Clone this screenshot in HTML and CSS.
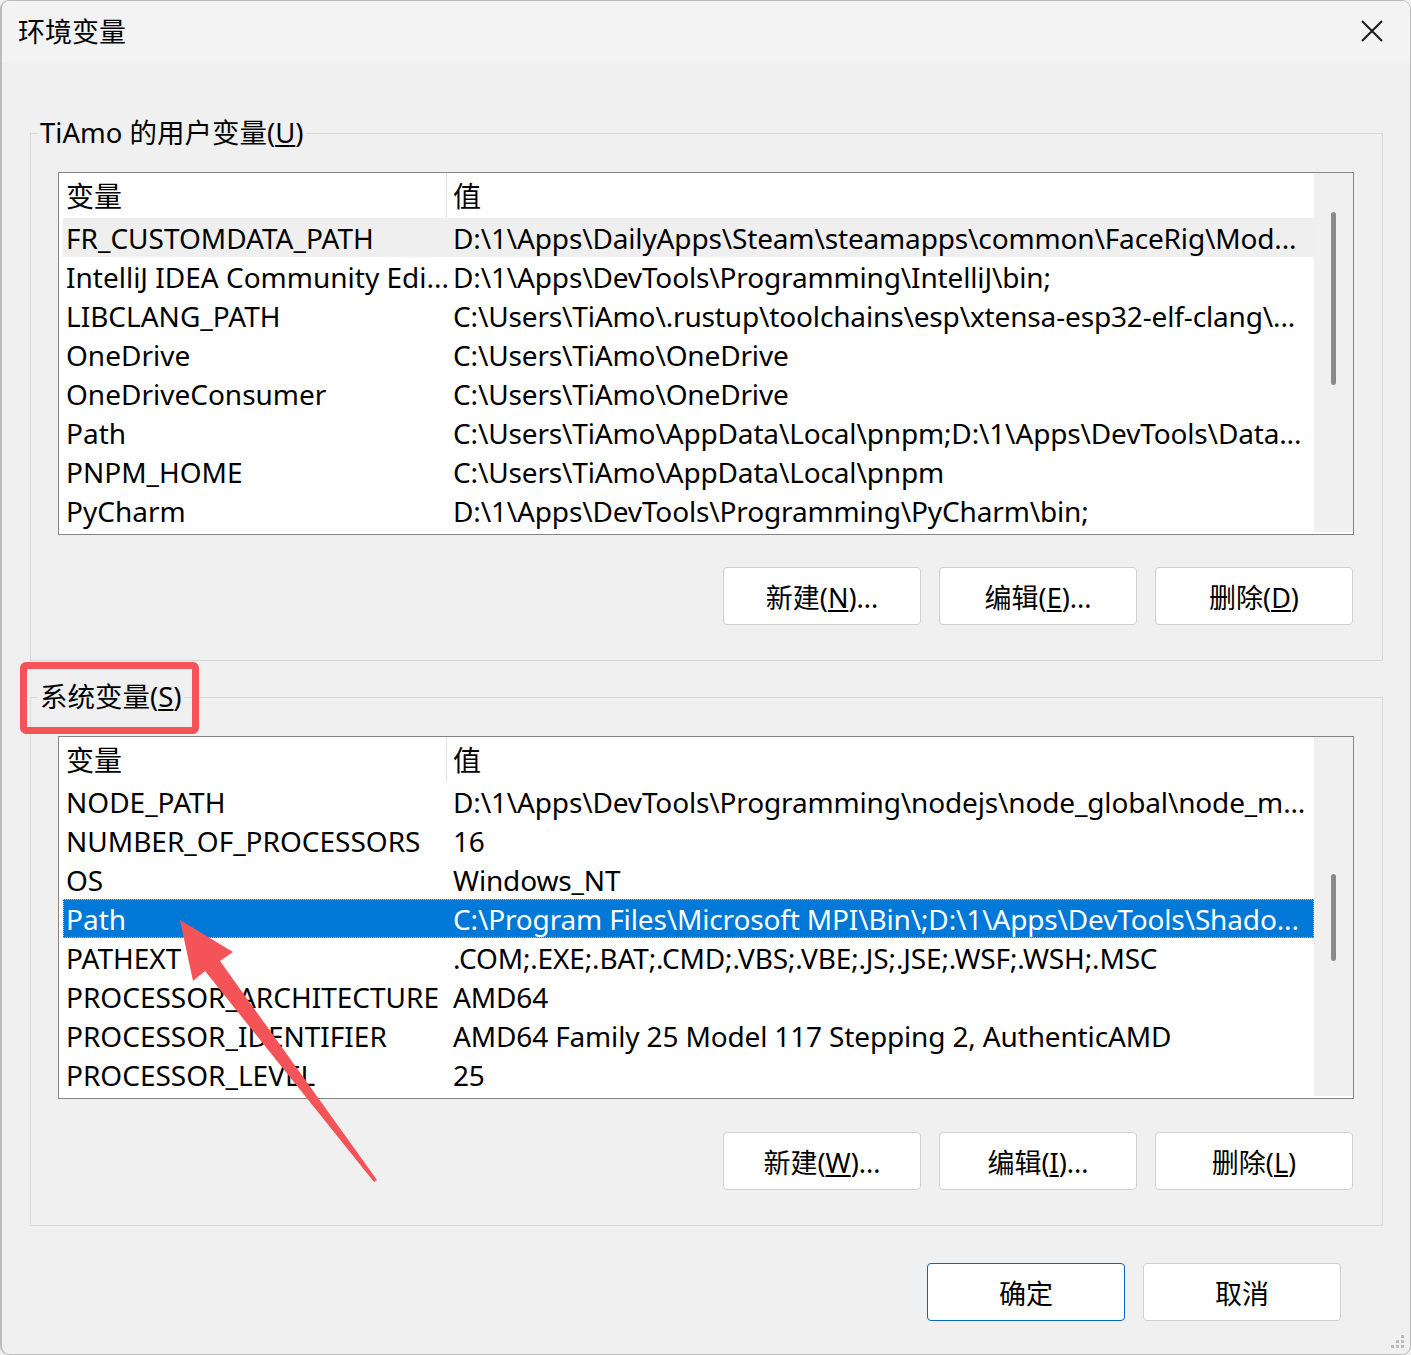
FILE: index.html
```html
<!DOCTYPE html>
<html>
<head>
  <meta charset="utf-8">
  <title>环境变量</title>
  <link rel="stylesheet" href="styles.css">
</head>
<body>
  <div class="window">
    <div class="titlebar">
      <span class="title">环境变量</span>
      <button class="close" aria-label="关闭">
        <svg width="22" height="22" viewBox="0 0 22 22"><path d="M1 1 L21 21 M21 1 L1 21" stroke="#1b1b1b" stroke-width="2" fill="none"/></svg>
      </button>
    </div>

    <fieldset class="group">
      <legend>TiAmo 的用户变量(<u>U</u>)</legend>
      <div class="list">
        <div class="list-body">
          <div class="row head"><span class="cell name">变量</span><span class="cell value">值</span></div>
          <div class="row hover"><span class="cell name">FR_CUSTOMDATA_PATH</span><span class="cell value">D:\1\Apps\DailyApps\Steam\steamapps\common\FaceRig\Mod...</span></div>
          <div class="row"><span class="cell name">IntelliJ IDEA Community Edi...</span><span class="cell value">D:\1\Apps\DevTools\Programming\IntelliJ\bin;</span></div>
          <div class="row"><span class="cell name">LIBCLANG_PATH</span><span class="cell value">C:\Users\TiAmo\.rustup\toolchains\esp\xtensa-esp32-elf-clang\...</span></div>
          <div class="row"><span class="cell name">OneDrive</span><span class="cell value">C:\Users\TiAmo\OneDrive</span></div>
          <div class="row"><span class="cell name">OneDriveConsumer</span><span class="cell value">C:\Users\TiAmo\OneDrive</span></div>
          <div class="row"><span class="cell name">Path</span><span class="cell value">C:\Users\TiAmo\AppData\Local\pnpm;D:\1\Apps\DevTools\Data...</span></div>
          <div class="row"><span class="cell name">PNPM_HOME</span><span class="cell value">C:\Users\TiAmo\AppData\Local\pnpm</span></div>
          <div class="row"><span class="cell name">PyCharm</span><span class="cell value">D:\1\Apps\DevTools\Programming\PyCharm\bin;</span></div>
        </div>
        <div class="scrollbar"><div class="thumb" style="margin-top: 39px; height: 173px;"></div></div>
      </div>
      <div class="actions">
        <button class="btn">新建(<u>N</u>)...</button>
        <button class="btn">编辑(<u>E</u>)...</button>
        <button class="btn">删除(<u>D</u>)</button>
      </div>
    </fieldset>

    <fieldset class="group second">
      <legend>系统变量(<u>S</u>)</legend>
      <div class="list">
        <div class="list-body">
          <div class="row head"><span class="cell name">变量</span><span class="cell value">值</span></div>
          <div class="row"><span class="cell name">NODE_PATH</span><span class="cell value">D:\1\Apps\DevTools\Programming\nodejs\node_global\node_m...</span></div>
          <div class="row"><span class="cell name">NUMBER_OF_PROCESSORS</span><span class="cell value">16</span></div>
          <div class="row"><span class="cell name">OS</span><span class="cell value">Windows_NT</span></div>
          <div class="row selected"><span class="cell name">Path</span><span class="cell value">C:\Program Files\Microsoft MPI\Bin\;D:\1\Apps\DevTools\Shado...</span></div>
          <div class="row"><span class="cell name">PATHEXT</span><span class="cell value">.COM;.EXE;.BAT;.CMD;.VBS;.VBE;.JS;.JSE;.WSF;.WSH;.MSC</span></div>
          <div class="row"><span class="cell name">PROCESSOR_ARCHITECTURE</span><span class="cell value">AMD64</span></div>
          <div class="row"><span class="cell name">PROCESSOR_IDENTIFIER</span><span class="cell value">AMD64 Family 25 Model 117 Stepping 2, AuthenticAMD</span></div>
          <div class="row"><span class="cell name">PROCESSOR_LEVEL</span><span class="cell value">25</span></div>
        </div>
        <div class="scrollbar"><div class="thumb" style="margin-top: 137px; height: 87px;"></div></div>
      </div>
      <div class="actions">
        <button class="btn">新建(<u>W</u>)...</button>
        <button class="btn">编辑(<u>I</u>)...</button>
        <button class="btn">删除(<u>L</u>)</button>
      </div>
    </fieldset>

    <div class="footer">
      <button class="btn primary">确定</button>
      <button class="btn">取消</button>
    </div>

    <!-- annotation drawn over the screenshot -->
    <div class="mark-box"></div>
    <svg class="mark-arrow" width="1411" height="1355" viewBox="0 0 1411 1355">
      <polygon points="180,920 233,952 220,961 377,1180 374,1182 205,971 193,981" fill="#f45457"/>
    </svg>

    <svg class="grip" width="16" height="16" viewBox="0 0 16 16">
      <rect x="11" y="1" width="3" height="3"/>
      <rect x="6" y="6" width="3" height="3"/>
      <rect x="11" y="6" width="3" height="3"/>
      <rect x="1" y="11" width="3" height="3"/>
      <rect x="6" y="11" width="3" height="3"/>
      <rect x="11" y="11" width="3" height="3"/>
    </svg>
  </div>
</body>
</html>
```

FILE: styles.css
```css
body {
  margin: 0;
  background: #f0f0f0;
  font-family: "Noto Sans", "Noto Sans CJK SC", sans-serif;
  font-size: 27px;
  color: #000;
}
.window {
  position: relative;
  box-sizing: border-box;
  width: 1411px;
  height: 1355px;
  background: #f0f0f0;
  border: 1px solid #bdbdbd;
  border-left-width: 2px;
  border-radius: 9px;
  overflow: hidden;
}
.titlebar {
  display: flex;
  align-items: center;
  justify-content: space-between;
  height: 62px;
  padding: 0 17px 0 16px;
  background: #f3f3f3;
}
.title {
  font-size: 27px;
  line-height: 36px;
}
.close {
  display: flex;
  border: none;
  background: none;
  padding: 0;
  margin-right: 10px;
  margin-top: -2px;
}

.group {
  margin: 52px 27px 0 28px;
  padding: 0;
  border: 1px solid #d9d9d9;
  min-width: 0;
}
.group.second {
  margin-top: 18px;
}
.group legend {
  margin-left: 7px;
  padding: 0 2px;
  line-height: 36px;
  font-size: 27.5px;
}

.list {
  display: flex;
  height: 363px;
  box-sizing: border-box;
  margin: 21px 28px 0 27px;
  background: #fff;
  border: 1px solid #858585;
  overflow: hidden;
}
.list-body {
  flex: 1;
  min-width: 0;
  padding-left: 4px;
  font-size: 28px;
}
.row {
  display: grid;
  grid-template-columns: 384px 1fr;
  height: 39px;
  white-space: nowrap;
}
.row.head {
  height: 45px;
}
.cell {
  box-sizing: border-box;
  height: 39px;
  padding-top: 2px;
  line-height: 37px;
  overflow: hidden;
}
.cell.name {
  padding-left: 3px;
  overflow: visible;
}
.cell.value {
  padding-left: 6px;
  letter-spacing: -0.15px;
}
.row.head .cell {
  height: 45px;
  line-height: 43px;
}
.row.head .name {
  border-right: 1px solid #e5e5e5;
}
.row.hover {
  background: #efefef;
}
.row.selected {
  background: #0078d7;
  color: #fff;
  outline: 1px dotted #8cc4f2;
  outline-offset: -1px;
}

.scrollbar {
  display: flex;
  justify-content: center;
  align-items: flex-start;
  width: 39px;
  margin-bottom: 2px;
  background: #f0f0f0;
}
.thumb {
  width: 5px;
  background: #8a8a8a;
  border-radius: 3px;
}

.actions {
  display: flex;
  justify-content: flex-end;
  gap: 18px;
  margin: 32px 29px 35px 0;
}
.second .actions {
  margin-top: 33px;
}
.btn {
  width: 198px;
  height: 58px;
  background: #fff;
  border: 1px solid #d0d0d0;
  border-radius: 4px;
  font-family: inherit;
  font-size: 27px;
  color: #000;
  padding: 0;
}
.btn.primary {
  border-color: #0067c0;
}
.footer {
  display: flex;
  justify-content: flex-end;
  gap: 18px;
  margin: 37px 69px 0 0;
}

.mark-box {
  position: absolute;
  left: 18px;
  top: 661px;
  width: 179px;
  height: 72px;
  box-sizing: border-box;
  border: 7px solid #f45457;
  border-radius: 6px;
}
.mark-arrow {
  position: absolute;
  left: -2px;
  top: -1px;
  pointer-events: none;
}
.grip {
  position: absolute;
  right: 4px;
  bottom: 4px;
  fill: #bcbcbc;
}
```
